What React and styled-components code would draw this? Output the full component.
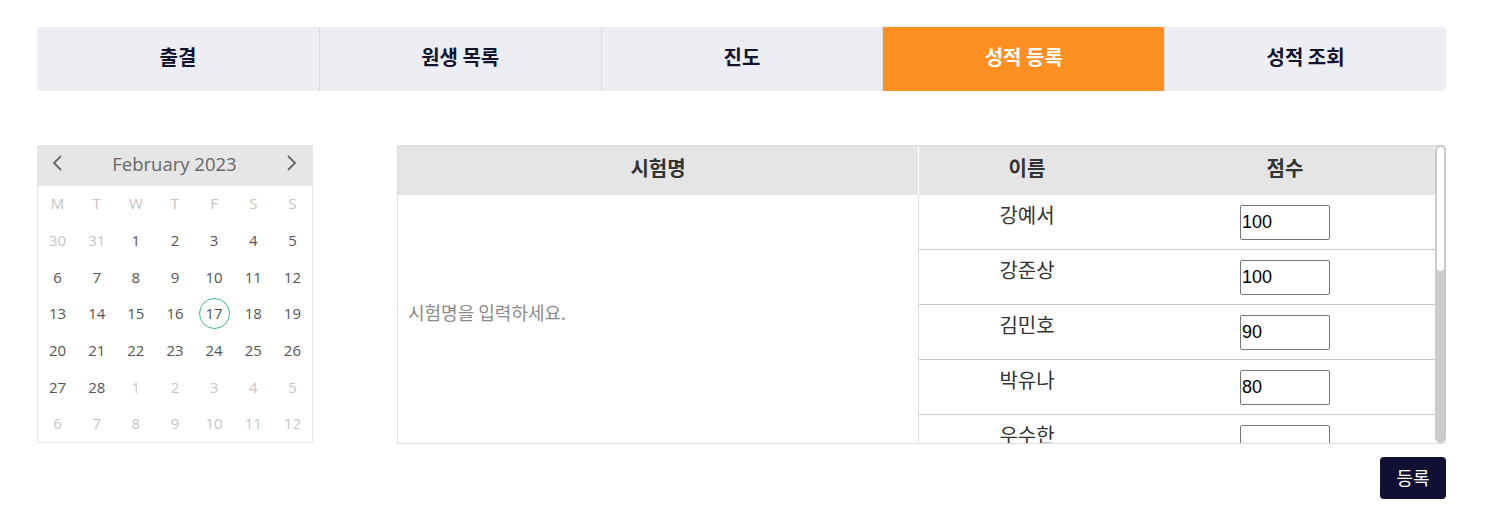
import React from "react";
import styled, { createGlobalStyle } from "styled-components";

const GlobalStyle = createGlobalStyle`
  * { box-sizing: border-box; }
  body {
    margin: 0;
    background: #fff;
    font-family: "Noto Sans CJK KR", "Noto Sans", sans-serif;
  }
`;

const Page = styled.div`
  width: 1488px;
  padding: 27px 42px 0 37px;
`;

const Tabs = styled.div`
  display: grid;
  grid-template-columns: repeat(5, 1fr);
  height: 64px;
  background: #edeef3;
  border-radius: 4px;
  overflow: hidden;
`;

const Tab = styled.div`
  display: flex;
  align-items: center;
  justify-content: center;
  padding-bottom: 5px;
  font-size: 20px;
  font-weight: 700;
  color: ${(p) => (p.$active ? "#fff" : "#12132f")};
  background: ${(p) => (p.$active ? "#fe9022" : "transparent")};
  border-left: ${(p) => (p.$first ? "none" : "1px solid #d8dae2")};
`;

const Body = styled.div`
  display: flex;
  align-items: flex-start;
  gap: 84px;
  margin-top: 54px;
`;

const Calendar = styled.div`
  width: 276px;
  height: 298px;
  border: 1px solid #e6e6e6;
  font-family: "Open Sans", sans-serif;
`;

const CalHeader = styled.div`
  display: flex;
  align-items: center;
  justify-content: space-between;
  height: 41px;
  margin: -1px -1px 0;
  padding: 0 14px 5px 13px;
  background: #e6e6e6;
  font-size: 18.5px;
  color: #666;
`;

const Arrow = styled.svg`
  width: 14px;
  height: 18px;
`;

const DayGrid = styled.div`
  display: grid;
  grid-template-columns: repeat(7, 1fr);
  grid-auto-rows: 36.7px;
`;

const WeekDay = styled.div`
  display: flex;
  align-items: center;
  justify-content: center;
  padding-bottom: 3px;
  font-size: 15px;
  color: #c4c4c4;
`;

const Day = styled.div`
  display: flex;
  align-items: center;
  justify-content: center;
  padding-bottom: 2px;
  font-size: 15px;
  color: ${(p) => (p.$muted ? "#c6c6c6" : "#555")};
`;

const Today = styled.span`
  display: flex;
  align-items: center;
  justify-content: center;
  width: 31px;
  height: 31px;
  border: 1px solid #3fb97e;
  border-radius: 50%;
`;

const Right = styled.div`
  flex: 1;
  display: flex;
  flex-direction: column;
  align-items: flex-end;
`;

const TableBox = styled.div`
  display: flex;
  width: 100%;
  height: 299px;
  border: 1px solid #dedede;
  border-right: none;
`;

const Viewport = styled.div`
  flex: 1;
  overflow: hidden;
`;

const ScrollTrack = styled.div`
  width: 11px;
  margin-top: -1px;
  background: #cbcbcb;
  border-radius: 6px;
`;

const ScrollThumb = styled.div`
  height: 128px;
  background: #fff;
  border: 2px solid #cbcbcb;
  border-radius: 6px;
`;

const Grid = styled.div`
  display: grid;
  grid-template-columns: 521px 216px 1fr;
`;

const HeadCell = styled.div`
  display: flex;
  align-items: center;
  justify-content: center;
  height: 49px;
  padding-bottom: 6px;
  background: #e5e5e5;
  font-size: 20px;
  font-weight: 700;
  color: #333;
  border-right: ${(p) => (p.$divider ? "1px solid #fff" : "none")};
`;

const ExamCell = styled.div`
  grid-row: 2 / span ${(p) => p.$rows};
  border-right: 1px solid #dedede;
`;

const ExamInput = styled.input`
  display: block;
  width: 100%;
  height: 234px;
  padding: 0 10px;
  border: none;
  outline: none;
  font-family: "Noto Sans CJK KR", sans-serif;
  font-size: 18px;
  color: #333;
  &::placeholder {
    color: #8a8a8a;
  }
`;

const NameCell = styled.div`
  grid-column: 2;
  height: 55px;
  padding-top: 5px;
  text-align: center;
  font-size: 20px;
  color: #333;
  border-bottom: 1px solid #c8c8c8;
`;

const ScoreCell = styled.div`
  height: 55px;
  padding-top: 10px;
  display: flex;
  justify-content: center;
  border-bottom: 1px solid #c8c8c8;
`;

const ScoreInput = styled.input`
  width: 90px;
  height: 35px;
  padding: 0 1px;
  border: 1px solid #767676;
  border-radius: 2px;
  font-family: "Liberation Sans", Arial, sans-serif;
  font-size: 18px;
  color: #000;
`;

const SubmitButton = styled.button`
  margin-top: 13px;
  width: 66px;
  height: 42px;
  padding-bottom: 3px;
  border: none;
  border-radius: 4px;
  background: #0f1033;
  color: #fff;
  font-family: "Noto Sans CJK KR", sans-serif;
  font-size: 18px;
`;

const tabs = ["출결", "원생 목록", "진도", "성적 등록", "성적 조회"];
const weekDays = ["M", "T", "W", "T", "F", "S", "S"];

const days = [
  { d: 30, m: true },
  { d: 31, m: true },
  ...Array.from({ length: 28 }, (_, i) => ({ d: i + 1 })),
  ...Array.from({ length: 12 }, (_, i) => ({ d: i + 1, m: true })),
];

const students = [
  { name: "강예서", score: "100" },
  { name: "강준상", score: "100" },
  { name: "김민호", score: "90" },
  { name: "박유나", score: "80" },
  { name: "우수한", score: "" },
];

const App = () => (
  <>
    <GlobalStyle />
    <Page>
      <Tabs>
        {tabs.map((t, i) => (
          <Tab key={t} $first={i === 0} $active={i === 3}>
            {t}
          </Tab>
        ))}
      </Tabs>

      <Body>
        <Calendar>
          <CalHeader>
            <Arrow viewBox="0 0 14 18">
              <polyline points="11,2 4,9 11,16" fill="none" stroke="#666" strokeWidth="1.8" />
            </Arrow>
            February 2023
            <Arrow viewBox="0 0 14 18">
              <polyline points="3,2 10,9 3,16" fill="none" stroke="#666" strokeWidth="1.8" />
            </Arrow>
          </CalHeader>
          <DayGrid>
            {weekDays.map((w, i) => (
              <WeekDay key={i}>{w}</WeekDay>
            ))}
            {days.map((day, i) => (
              <Day key={i} $muted={day.m}>
                {!day.m && day.d === 17 ? <Today>17</Today> : day.d}
              </Day>
            ))}
          </DayGrid>
        </Calendar>

        <Right>
          <TableBox>
            <Viewport>
              <Grid>
                <HeadCell $divider>시험명</HeadCell>
                <HeadCell>이름</HeadCell>
                <HeadCell>점수</HeadCell>
                <ExamCell $rows={students.length}>
                  <ExamInput placeholder="시험명을 입력하세요." />
                </ExamCell>
                {students.map((s, i) => (
                  <React.Fragment key={i}>
                    <NameCell>{s.name}</NameCell>
                    <ScoreCell>
                      <ScoreInput defaultValue={s.score} />
                    </ScoreCell>
                  </React.Fragment>
                ))}
              </Grid>
            </Viewport>
            <ScrollTrack>
              <ScrollThumb />
            </ScrollTrack>
          </TableBox>
          <SubmitButton>등록</SubmitButton>
        </Right>
      </Body>
    </Page>
  </>
);

export default App;
